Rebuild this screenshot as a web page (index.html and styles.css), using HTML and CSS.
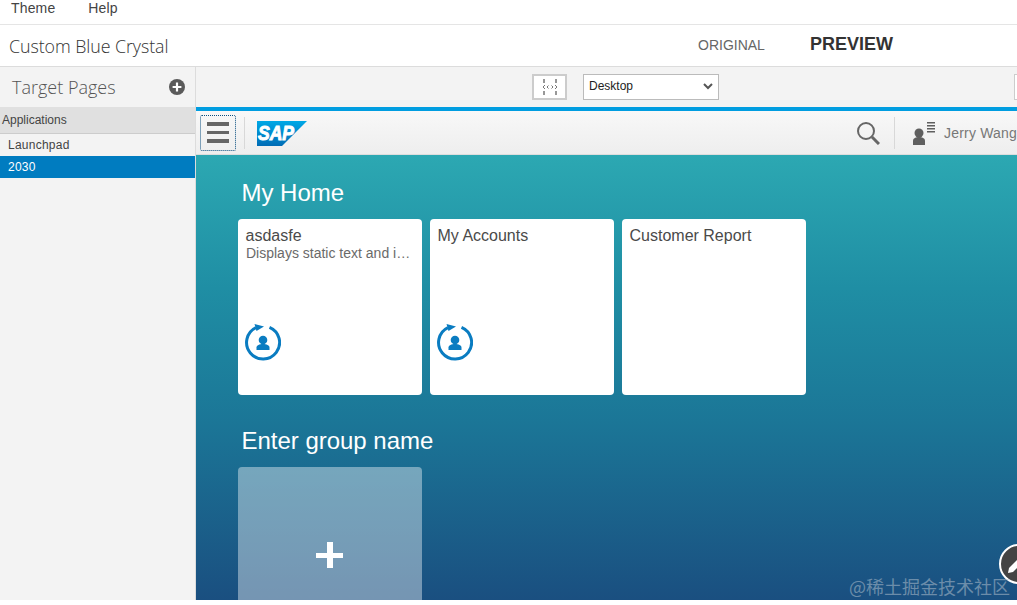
FILE: index.html
```html
<!DOCTYPE html>
<html lang="en">
<head>
<meta charset="utf-8">
<title>Custom Blue Crystal</title>
<link rel="stylesheet" href="styles.css">
</head>
<body>
<div class="page">
  <nav class="menubar">
    <span class="menu-item">Theme</span>
    <span class="menu-item">Help</span>
  </nav>
  <header class="titlebar">
    <h1 class="theme-name">Custom Blue Crystal</h1>
    <div class="tabs">
      <span class="tab">ORIGINAL</span>
      <span class="tab tab-active">PREVIEW</span>
    </div>
  </header>
  <div class="workspace">
    <aside class="sidebar">
      <div class="side-head">
        <h2 class="side-title">Target Pages</h2>
        <svg class="add-icon" width="16" height="16" viewBox="0 0 16 16"><circle cx="8" cy="8" r="8" fill="#5a5a5a"/><path d="M8 3.600v8.800M3.600 8h8.800" stroke="#fff" stroke-width="2.200"/></svg>
      </div>
      <div class="side-group">Applications</div>
      <div class="side-item">Launchpad</div>
      <div class="side-item side-item-active">2030</div>
    </aside>
    <main class="preview">
      <div class="toolbar">
        <span class="fit-btn">
          <svg width="16" height="16" viewBox="0 0 16 16" fill="none" stroke="#777" stroke-width="1"><path d="M2 0v4M2 12v4M14 0v4M14 12v4" stroke-width="1.500"/><path d="M3 6 1 8l2 2M13 6l2 2-2 2M6.500 6.500 5 8l1.500 1.500M9.500 6.500 11 8 9.500 9.500"/></svg>
        </span>
        <div class="device-select">
          <span>Desktop</span>
          <svg width="10" height="7" viewBox="0 0 10 7" fill="none" stroke="#555" stroke-width="2"><path d="M1 1l4 4 4-4"/></svg>
        </div>
        <span class="edge-btn"></span>
      </div>
      <div class="shell">
        <div class="shell-head">
          <button class="burger" type="button" aria-label="Menu"><i></i><i></i><i></i></button>
          <span class="shell-sep"></span>
          <svg class="sap-logo" width="50" height="25" viewBox="0 0 50 25">
            <defs><linearGradient id="sapg" x1="0" y1="0" x2="0" y2="1"><stop offset="0" stop-color="#00a8e6"/><stop offset="1" stop-color="#006cb5"/></linearGradient></defs>
            <polygon points="0,0 50,0 25,25 0,25" fill="url(#sapg)"/>
            <text x="1" y="19" class="sap-text" textLength="36" lengthAdjust="spacingAndGlyphs">SAP</text>
          </svg>
          <span class="shell-spacer"></span>
          <svg class="search-icon" width="24" height="24" viewBox="0 0 24 24" fill="none" stroke="#666"><circle cx="10" cy="10" r="8" stroke-width="2"/><path d="M16 16l7 7" stroke-width="3"/></svg>
          <span class="shell-sep shell-sep-right"></span>
          <svg class="user-icon" width="24" height="24" viewBox="0 0 24 24" fill="#5f5f5f"><circle cx="7" cy="12" r="4.500"/><path d="M1 24v-4c0-3 3-4 6-4s6 1 6 4v4z"/><path d="M15 1h8v1.500h-8zM15 4h8v1.500h-8zM15 7h8v1.500h-8zM15 10h8v1.500h-8z"/></svg>
          <span class="user-name">Jerry Wang</span>
        </div>
        <div class="canvas">
          <h3 class="group-title">My Home</h3>
          <div class="tiles">
            <article class="tile">
              <div class="tile-title">asdasfe</div>
              <div class="tile-sub">Displays static text and i…</div>
              <svg class="tile-icon" width="36" height="38" viewBox="0 0 36 38"><use href="#refresh-user"/></svg>
            </article>
            <article class="tile">
              <div class="tile-title">My Accounts</div>
              <svg class="tile-icon tile-icon-low" width="36" height="38" viewBox="0 0 36 38"><use href="#refresh-user"/></svg>
            </article>
            <article class="tile">
              <div class="tile-title">Customer Report</div>
            </article>
          </div>
          <h3 class="group-title group-title-second">Enter group name</h3>
          <div class="tiles">
            <div class="tile tile-add"><span class="plus"></span></div>
          </div>
        </div>
      </div>
    </main>
  </div>
  <button class="edit-fab" type="button" aria-label="Edit">
    <svg width="24" height="24" viewBox="0 0 24 24"><path d="M7 21l1-5 8-8 4 4-8 8z" fill="#fff"/></svg>
  </button>
  <div class="watermark">@稀土掘金技术社区</div>
</div>
<svg width="0" height="0" class="defs">
  <defs>
    <g id="refresh-user">
      <path d="M24.500 4.300A16.500 16.500 0 1 1 11 4.600" fill="none" stroke="#0a7cc1" stroke-width="3"/>
      <path d="M9.500 1 19 3.500 11.500 8z" fill="#0a7cc1"/>
      <circle cx="18" cy="17" r="4.300" fill="#0a7cc1"/>
      <path d="M11.500 27v-2.500c0-2.200 3-3.500 6.500-3.500s6.500 1.300 6.500 3.500V27z" fill="#0a7cc1"/>
    </g>
  </defs>
</svg>
</body>
</html>
```
FILE: styles.css
```css
* { box-sizing: border-box; }
html, body { margin: 0; padding: 0; background: #fff; }
body { width: 1017px; height: 605px; overflow: hidden; font-family: "Liberation Sans", Arial, sans-serif; color: #333; }
.page { position: relative; width: 1017px; height: 605px; overflow: hidden; }
.defs { display: block; height: 0; }

.menubar { height: 25px; border-bottom: 1px solid #e5e5e5; display: flex; gap: 33px; padding: 0 0 0 11px; font-size: 14px; line-height: 16px; color: #444; letter-spacing: 0.15px; }
.titlebar { height: 42px; border-bottom: 1px solid #dcdcdc; display: flex; align-items: center; justify-content: space-between; padding-left: 9px; }
.theme-name { margin: 0; font-family: "Open Sans", sans-serif; font-weight: 300; font-size: 17.800px; color: #333; letter-spacing: -0.05px; }
.tabs { display: flex; align-items: center; gap: 45px; width: 319px; margin-top: -2px; }
.tab { font-size: 14px; color: #666; }
.tab-active { font-size: 18px; font-weight: 700; color: #333; }

.workspace { display: flex; height: 533px; background: #fff; }
.sidebar { width: 196px; height: 533px; flex: none; background: #f3f3f3; border-right: 1px solid #dcdcdc; }
.side-head { height: 40px; display: flex; align-items: center; justify-content: space-between; padding: 0 10px 0 12px; }
.side-title { margin: 0; font-family: "Open Sans", sans-serif; font-weight: 300; font-size: 18px; color: #555; }
.side-group { height: 27px; background: #e0e0e0; border-bottom: 1px solid #ccc; font-size: 12px; line-height: 26px; padding-left: 2px; color: #444; }
.side-item { height: 22px; font-size: 12px; line-height: 22px; padding-left: 8px; color: #444; letter-spacing: 0.25px; }
.side-item-active { background: #007cc0; color: #fff; }

.preview { flex: 1; min-width: 0; display: flex; flex-direction: column; overflow: hidden; }
.toolbar { height: 40px; flex: none; background: #f3f3f3; display: flex; align-items: center; padding-left: 336px; }
.fit-btn { width: 35px; height: 26px; flex: none; background: #fff; border: 2px solid #ccc; display: flex; align-items: center; justify-content: center; margin-right: 16px; }
.device-select { width: 136px; height: 26px; flex: none; background: #fff; border: 1px solid #bbb; display: flex; align-items: center; justify-content: space-between; padding: 0 5px 2px 5px; font-size: 12px; color: #222; }
.edge-btn { width: 20px; height: 26px; flex: none; margin-left: 295px; background: #fff; border: 1px solid #ccc; }

.shell { height: 493px; flex: none; border-top: 4px solid #009de0; display: flex; flex-direction: column; }
.shell-head { height: 44px; flex: none; background: linear-gradient(#f8f8f8, #eeeeee); border-bottom: 1px solid #ddd; display: flex; align-items: center; padding-left: 4px; overflow: hidden; white-space: nowrap; }
.burger { width: 36px; height: 36px; flex: none; padding: 0; background: transparent; border: 1px dotted #0a4f80; border-radius: 2px; display: flex; flex-direction: column; align-items: center; justify-content: center; gap: 5px; }
.burger i { display: block; width: 22px; height: 3.500px; background: #666; }
.shell-sep { width: 1px; height: 32px; flex: none; background: #d8d8d8; margin: 0 12px 0 8px; }
.sap-logo { flex: none; margin-top: 2px; }
.sap-text { font-family: "Liberation Sans", sans-serif; font-weight: 700; font-style: italic; font-size: 20px; fill: #fff; stroke: #fff; stroke-width: 1px; }
.shell-spacer { flex: 1; }
.search-icon { flex: none; margin-right: 14px; }
.shell-sep-right { margin: 0 17px 0 0; }
.user-icon { flex: none; margin: 0 8px 0 0; }
.user-name { font-size: 14px; color: #777; width: 73px; flex: none; letter-spacing: 0.2px; }

.canvas { flex: 1; min-height: 0; height: 445px; background: linear-gradient(#2ca8b2 0%, #1f8ea4 30%, #1b7697 60%, #1a4f80 100%); padding: 24px 0 0 42px; overflow: hidden; }
.group-title { margin: 0 0 12px 3.500px; font-size: 24px; font-weight: 400; line-height: 28px; color: #fff; letter-spacing: -0.02px; }
.group-title-second { margin-top: 32px; }
.tiles { display: flex; gap: 8px; }
.tile { width: 184px; height: 176px; flex: none; background: #fff; border-radius: 4px; padding: 7px 7.500px; position: relative; display: flex; flex-direction: column; }
.tile-title { font-size: 16px; line-height: 19px; color: #4a4a4a; }
.tile-sub { font-size: 14px; line-height: 16px; color: #6a6a6a; white-space: nowrap; padding-left: 0.500px; }
.tile-icon { margin-top: 62px; margin-left: -0.500px; }
.tile-icon-low { margin-top: 78px; }
.tile-add { background: rgba(255,255,255,0.4); justify-content: center; align-items: center; }
.plus { display: block; width: 27px; height: 26px; margin-left: -1px; background: linear-gradient(#fff,#fff) center/100% 5px no-repeat, linear-gradient(#fff,#fff) center/6px 100% no-repeat; }

.edit-fab { position: absolute; left: 999px; top: 544px; width: 40px; height: 40px; padding: 0; border-radius: 50%; background: #444; border: 2px solid #fff; display: flex; align-items: center; justify-content: flex-start; }
.watermark { position: absolute; left: 849px; top: 576px; font-family: "Noto Sans CJK SC", sans-serif; font-size: 18px; line-height: 20px; color: rgba(190,200,210,0.5); white-space: nowrap; }
.page::after { content: ""; position: absolute; left: 0; right: 0; bottom: 0; height: 5px; background: #fff; }
```
